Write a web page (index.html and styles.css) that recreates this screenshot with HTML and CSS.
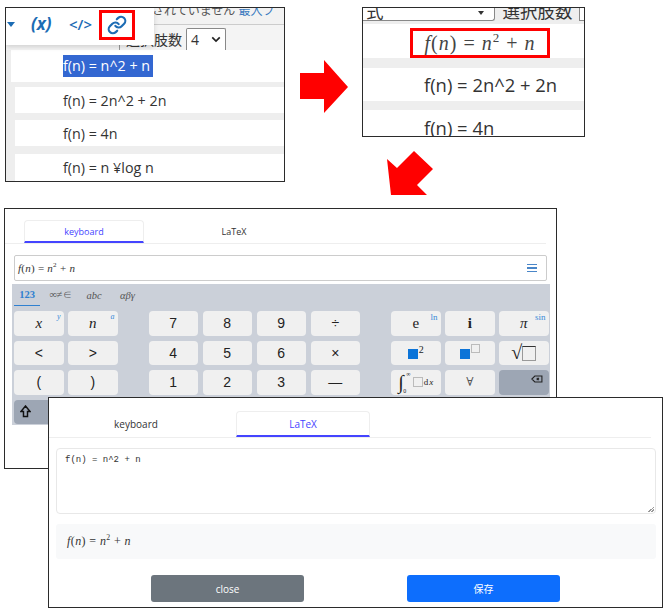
FILE: index.html
```html
<!DOCTYPE html>
<html lang="ja">
<head>
    <meta charset="UTF-8">
    <title>数式エディタ</title>
    <link rel="stylesheet" href="styles.css">
</head>
<body>
    <!-- step 1: toolbar and plain choices -->
    <div class="shot shot-toolbar">
        <div class="strip"><span class="strip-text">されていません <a class="strip-link">最入フ</a></span></div>
        <div class="select-bar">
            <span class="select-label">選択肢数</span>
            <span class="select-box">4 <svg class="chevron" viewBox="0 0 12 8"><path d="M1.5 1.5 6 6l4.5-4.5"/></svg></span>
        </div>
        <div class="row row-first"><span class="selected">f(n) = n^2 + n</span></div>
        <div class="row row-second">f(n) = 2n^2 + 2n</div>
        <div class="row row-third">f(n) = 4n</div>
        <div class="row row-fourth">f(n) = n ¥log n</div>
        <div class="toolbar">
            <span class="caret"></span>
            <span class="tool tool-var">(x)</span>
            <span class="tool tool-code">&lt;/&gt;</span>
            <span class="tool-link">
                <svg viewBox="0 0 24 24"><path d="M10 13a5 5 0 0 0 7.54.54l3-3a5 5 0 0 0-7.07-7.07l-1.72 1.71"/><path d="M14 11a5 5 0 0 0-7.54-.54l-3 3a5 5 0 0 0 7.07 7.07l1.71-1.71"/></svg>
            </span>
        </div>
    </div>

    <!-- step 2: rendered formula -->
    <div class="shot shot-result">
        <div class="result-top">
            <span class="result-select">式<span class="result-arrow"></span></span>
            <span class="result-label">選択肢数</span>
            <span class="result-edge"></span>
        </div>
        <div class="result-row result-row-first">
            <span class="math-box"><span class="math"><i>f</i>(<i>n</i>) = <i>n</i><sup>2</sup> + <i>n</i></span></span>
        </div>
        <div class="result-row result-row-second">f(n) = 2n^2 + 2n</div>
        <div class="result-row result-row-third">f(n) = 4n</div>
    </div>

    <svg class="arrows" viewBox="0 0 668 613">
        <polygon points="300,73 324,73 324,60 348,87 324,113 324,99 300,99"/>
        <polygon points="387,159 397,168 414,151 433,169 417,185 427,195 391,195"/>
    </svg>

    <!-- step 3: keyboard tab -->
    <div class="shot shot-keyboard">
        <div class="tabs">
            <span class="tab tab-active">keyboard</span>
            <span class="tab">LaTeX</span>
        </div>
        <div class="formula-input">
            <span class="math math-input"><i>f</i>(<i>n</i>) = <i>n</i><sup>2</sup> + <i>n</i></span>
            <span class="menu-icon"><b></b><b></b><b></b></span>
        </div>
        <div class="keyboard">
            <div class="key-tabs">
                <span class="key-tab key-tab-active">123</span>
                <span class="key-tab">∞≠∈</span>
                <span class="key-tab"><i>abc</i></span>
                <span class="key-tab"><i>αβγ</i></span>
            </div>
            <div class="key-groups">
                <div class="key-group group-left">
                    <span class="key key-serif"><i>x</i><em class="hint">y</em></span>
                    <span class="key key-serif"><i>n</i><em class="hint">a</em></span>
                    <span class="key">&lt;</span>
                    <span class="key">&gt;</span>
                    <span class="key">(</span>
                    <span class="key">)</span>
                    <span class="key key-dark key-shift">
                        <svg viewBox="0 0 12 14"><path d="M6 1 11 7H8.2v5.5H3.8V7H1z"/></svg>
                    </span>
                    <span class="key key-dark"></span>
                </div>
                <div class="key-group group-mid">
                    <span class="key">7</span><span class="key">8</span><span class="key">9</span><span class="key">÷</span>
                    <span class="key">4</span><span class="key">5</span><span class="key">6</span><span class="key">×</span>
                    <span class="key">1</span><span class="key">2</span><span class="key">3</span><span class="key">—</span>
                </div>
                <div class="key-group group-right">
                    <span class="key key-serif">e<em class="hint hint-up">ln</em></span>
                    <span class="key key-serif key-bold">i</span>
                    <span class="key key-serif"><i>π</i><em class="hint hint-up">sin</em></span>
                    <span class="key key-serif"><span class="blue-square"></span><sup class="key-sup">2</sup></span>
                    <span class="key"><span class="blue-square"></span><span class="empty-square"></span></span>
                    <span class="key key-serif key-sqrt">√<span class="root-square"></span></span>
                    <span class="key key-serif key-integral">
                        <span class="int-sign">∫<small class="int-top">∞</small><small class="int-bottom">0</small></span>
                        <span class="int-square"></span>d<i>x</i>
                    </span>
                    <span class="key key-serif key-forall">∀</span>
                    <span class="key key-dark key-back">
                        <svg viewBox="0 0 22 14"><path d="M7 1.5h13v11H7L1.5 7z"/><path d="M10.5 5l4 4m0-4l-4 4"/></svg>
                    </span>
                </div>
            </div>
        </div>
    </div>

    <!-- step 4: LaTeX tab -->
    <div class="shot shot-latex">
        <div class="tabs tabs-wide">
            <span class="tab">keyboard</span>
            <span class="tab tab-active">LaTeX</span>
        </div>
        <div class="latex-area">f(n) = n^2 + n<span class="resize-grip"></span></div>
        <div class="preview"><span class="math math-small"><i>f</i>(<i>n</i>) = <i>n</i><sup>2</sup> + <i>n</i></span></div>
        <div class="buttons">
            <button class="btn btn-close">close</button>
            <button class="btn btn-save">保存</button>
        </div>
    </div>
</body>
</html>
```

FILE: styles.css
```css
* {
    box-sizing: border-box;
}

body {
    margin: 0;
    width: 668px;
    height: 613px;
    overflow: hidden;
    position: relative;
    background-color: #fff;
    font-family: 'Open Sans', 'Noto Sans CJK JP', sans-serif;
    color: #333;
}

.shot {
    position: absolute;
    border: 1px solid #2b2b2b;
    overflow: hidden;
    background-color: #fff;
}

.math {
    font-family: 'Liberation Serif', serif;
    white-space: nowrap;
}

.math sup {
    font-size: 0.65em;
    line-height: 0;
}

.math-small {
    font-size: 12px;
    letter-spacing: 0.4px;
}

.math-input {
    font-size: 11px;
    letter-spacing: 0.25px;
}

/* step 1 */
.shot-toolbar {
    left: 5px;
    top: 7px;
    width: 280px;
    height: 175px;
    background-color: #eee;
}

.strip {
    height: 17px;
    background-color: #f2f2f2;
    border-bottom: 1px solid #ccc;
    padding-left: 146px;
    font-size: 12px;
    line-height: 5px;
    white-space: nowrap;
    color: #555;
}

.strip-link {
    color: #3a7bc0;
}

.select-bar {
    height: 25px;
    display: flex;
    align-items: flex-end;
    padding-left: 113px;
    background-color: #f4f4f4;
    font-size: 14px;
}

.select-label {
    width: 67px;
    height: 20px;
    line-height: 20px;
    border-left: 1px solid #999;
    padding-left: 6px;
    white-space: nowrap;
    overflow: hidden;
}

.select-box {
    width: 40px;
    height: 22px;
    background-color: #fff;
    border: 1px solid #888;
    border-bottom: none;
    border-radius: 2px 2px 0 0;
    display: flex;
    align-items: center;
    justify-content: space-between;
    padding: 0 4px;
}

.chevron {
    width: 10px;
    height: 7px;
    fill: none;
    stroke: #222;
    stroke-width: 2;
}

.row {
    background-color: #fff;
    font-size: 14.3px;
    display: flex;
    align-items: center;
    padding-left: 48px;
    margin-left: 9px;
    white-space: nowrap;
}

.row-first {
    height: 32px;
    margin-left: 5px;
    padding-left: 52px;
    margin-bottom: 5px;
}

.row-second {
    height: 26px;
    margin-bottom: 7px;
}

.row-third {
    height: 26px;
    margin-bottom: 8px;
}

.row-fourth {
    height: 27px;
}

.selected {
    background-color: #3367d1;
    color: #fff;
    height: 22px;
    line-height: 22px;
    width: 90px;
    overflow: hidden;
}

.toolbar {
    position: absolute;
    left: 0;
    top: 0;
    width: 148px;
    height: 37px;
    background-color: #fff;
    box-shadow: 0 2px 5px rgba(0, 0, 0, 0.15);
    color: #1c6cb4;
    font-weight: 700;
}

.caret {
    position: absolute;
    left: 1px;
    top: 14px;
    border-left: 4px solid transparent;
    border-right: 4px solid transparent;
    border-top: 5px solid #1c6cb4;
}

.tool {
    position: absolute;
    top: 4px;
    font-size: 17px;
    line-height: 24px;
}

.tool-var {
    left: 25px;
    font-style: italic;
}

.tool-code {
    left: 63px;
    font-size: 15px;
    font-weight: 600;
}

.tool-link {
    position: absolute;
    left: 93px;
    top: 2px;
    width: 36px;
    height: 30px;
    border: 3px solid #f00;
    display: flex;
    align-items: center;
    justify-content: center;
}

.tool-link svg {
    width: 20px;
    height: 20px;
    fill: none;
    stroke: #1c6cb4;
    stroke-width: 2.6;
    stroke-linecap: round;
}

/* step 2 */
.shot-result {
    left: 362px;
    top: 7px;
    width: 223px;
    height: 130px;
    background-color: #eee;
}

.result-top {
    height: 16px;
    display: flex;
    align-items: flex-start;
    font-size: 17.5px;
    line-height: 7px;
    background-color: #eee;
}

.result-select {
    width: 133px;
    height: 13px;
    background-color: #fff;
    border-right: 1px solid #888;
    border-bottom: 1px solid #888;
    border-radius: 0 0 3px 0;
    padding-left: 3px;
    position: relative;
}

.result-arrow {
    position: absolute;
    right: 10px;
    top: 3px;
    border-left: 3px solid transparent;
    border-right: 3px solid transparent;
    border-top: 4px solid #333;
}

.result-label {
    width: 84px;
    height: 13px;
    padding-left: 7px;
    white-space: nowrap;
    overflow: hidden;
}

.result-edge {
    width: 5px;
    height: 13px;
    background-color: #fff;
    border-left: 1px solid #888;
    border-bottom: 1px solid #888;
}

.result-row {
    background-color: #fff;
    font-size: 18.4px;
    padding-left: 61px;
    display: flex;
    align-items: center;
    white-space: nowrap;
}

.result-row-first {
    height: 34px;
    padding-left: 47px;
    margin-bottom: 10px;
    align-items: flex-end;
}

.result-row-second {
    height: 33px;
    margin-bottom: 9px;
}

.result-row-third {
    height: 26px;
    padding-top: 8px;
}

.math-box {
    width: 140px;
    height: 30px;
    border: 3px solid #f00;
    display: flex;
    align-items: center;
    justify-content: center;
    font-size: 20px;
    letter-spacing: 1px;
    color: #444;
}

.arrows {
    position: absolute;
    left: 0;
    top: 0;
    width: 668px;
    height: 613px;
    fill: #f00;
}

/* step 3 */
.shot-keyboard {
    left: 4px;
    top: 208px;
    width: 553px;
    height: 261px;
}

.tabs {
    display: flex;
    margin: 11px 10px 0 0;
    padding-left: 19px;
    border-bottom: 1px solid #eee;
    gap: 30px;
    font-size: 9px;
    height: 24px;
}

.tab {
    width: 120px;
    display: flex;
    align-items: center;
    justify-content: center;
    color: #333;
}

.tab-active {
    color: #4444ff;
    border: 1px solid #eee;
    border-bottom: 2px solid #4444ff;
    border-radius: 4px 4px 0 0;
}

.formula-input {
    width: 533px;
    height: 26px;
    margin: 11px 0 0 9px;
    border: 1px solid #ccc;
    border-radius: 2px;
    display: flex;
    align-items: center;
    justify-content: space-between;
    padding: 0 9px 0 3px;
}

.menu-icon {
    display: flex;
    flex-direction: column;
    gap: 2px;
}

.menu-icon b {
    display: block;
    width: 10px;
    height: 1.5px;
    background-color: #4a86c8;
}

.keyboard {
    width: 538px;
    height: 141px;
    margin: 3px 0 0 7px;
    background-color: #cbd0d9;
    padding: 0 2px;
}

.key-tabs {
    display: flex;
    height: 22px;
    font-family: 'Liberation Serif', serif;
    font-size: 10.5px;
    color: #555;
    margin-bottom: 5px;
}

.key-tab {
    width: 26px;
    margin-right: 7.5px;
    display: flex;
    align-items: center;
    justify-content: center;
    white-space: nowrap;
}

.key-tab-active {
    color: #2f80d0;
    font-weight: 700;
    border-bottom: 1px solid #2f80d0;
}

.key-groups {
    display: flex;
    gap: 31px;
}

.key-group {
    display: grid;
    grid-auto-rows: 24.5px;
    gap: 5px 4.5px;
}

.group-left {
    grid-template-columns: repeat(2, 49.5px);
}

.group-mid {
    grid-template-columns: repeat(4, 49.5px);
}

.group-right {
    grid-template-columns: repeat(3, 49.5px);
}

.key {
    position: relative;
    background-color: #f0f0f0;
    border-radius: 4px;
    display: flex;
    align-items: center;
    justify-content: center;
    font-size: 14px;
    color: #222;
    font-family: 'Liberation Sans', sans-serif;
}

.key-serif {
    font-family: 'Liberation Serif', serif;
    font-size: 15px;
}

.key-bold {
    font-weight: 700;
}

.key-forall {
    font-weight: 400;
    color: #555;
    font-family: 'DejaVu Serif', serif;
    font-size: 12px;
}

.key-dark {
    background-color: #9da6b4;
}

.key-shift {
    justify-content: flex-start;
    padding-left: 6px;
    align-items: flex-start;
    padding-top: 5px;
}

.key-shift svg {
    width: 11px;
    height: 13px;
    fill: none;
    stroke: #111;
    stroke-width: 1.6;
}

.hint {
    position: absolute;
    right: 3px;
    top: 1px;
    font-family: 'Liberation Serif', serif;
    font-size: 8px;
    color: #3a8ad8;
}

.hint-up {
    font-style: normal;
    font-size: 9px;
}

.blue-square {
    width: 10px;
    height: 10px;
    background-color: #0c74d8;
    margin-top: 3px;
}

.empty-square {
    width: 9px;
    height: 9px;
    border: 1px solid #bbb;
    margin: -8px 0 0 1px;
}

.key-sup {
    font-size: 10px;
    line-height: 0;
    margin: 0 0 6px 1px;
}

.key-sqrt {
    font-size: 20px;
}

.root-square {
    width: 14px;
    height: 15px;
    border: 1px solid #999;
    border-top: 1px solid #333;
    margin-top: 1px;
}

.key-integral {
    font-size: 9px;
    gap: 1px;
}

.int-sign {
    position: relative;
    font-size: 20px;
    margin-right: 8px;
}

.int-top,
.int-bottom {
    position: absolute;
    font-size: 6px;
    left: 8px;
}

.int-top {
    top: 0;
}

.int-bottom {
    bottom: 0;
    left: 5px;
}

.int-square {
    width: 10px;
    height: 10px;
    border: 1px solid #bbb;
}

.key-back {
    justify-content: flex-end;
    align-items: flex-start;
    padding: 5px 6px 0 0;
}

.key-back svg {
    width: 12px;
    height: 8px;
    fill: none;
    stroke: #222;
    stroke-width: 2;
}

/* step 4 */
.shot-latex {
    left: 48px;
    top: 397px;
    width: 615px;
    height: 211px;
}

.tabs-wide {
    margin: 13px 11px 0 0;
    padding-left: 20px;
    gap: 33px;
    height: 27px;
    font-size: 10px;
}

.tabs-wide .tab {
    width: 134px;
}

.latex-area {
    position: relative;
    width: 600px;
    height: 66px;
    margin: 10px 0 0 7px;
    border: 1px solid #e8e8e8;
    border-radius: 4px;
    padding: 3px 8px;
    font-family: 'Liberation Mono', monospace;
    font-size: 9px;
    line-height: 16px;
}

.resize-grip {
    position: absolute;
    right: 1px;
    bottom: 1px;
    width: 6px;
    height: 6px;
    background: linear-gradient(135deg, transparent 50%, #999 50%, #999 60%, transparent 60%, transparent 75%, #999 75%, #999 85%, transparent 85%);
}

.preview {
    width: 600px;
    height: 35px;
    margin: 10px 0 0 7px;
    background-color: #f8f9fa;
    border-radius: 3px;
    display: flex;
    align-items: center;
    padding-left: 11px;
}

.buttons {
    display: flex;
    gap: 103px;
    margin: 16px 0 0 102px;
}

.btn {
    width: 153px;
    height: 27px;
    border: none;
    border-radius: 3px;
    color: #fff;
    font-family: 'Open Sans', 'Noto Sans CJK JP', sans-serif;
    font-size: 10px;
}

.btn-close {
    background-color: #6c757d;
}

.btn-save {
    background-color: #0d6efd;
}
```
